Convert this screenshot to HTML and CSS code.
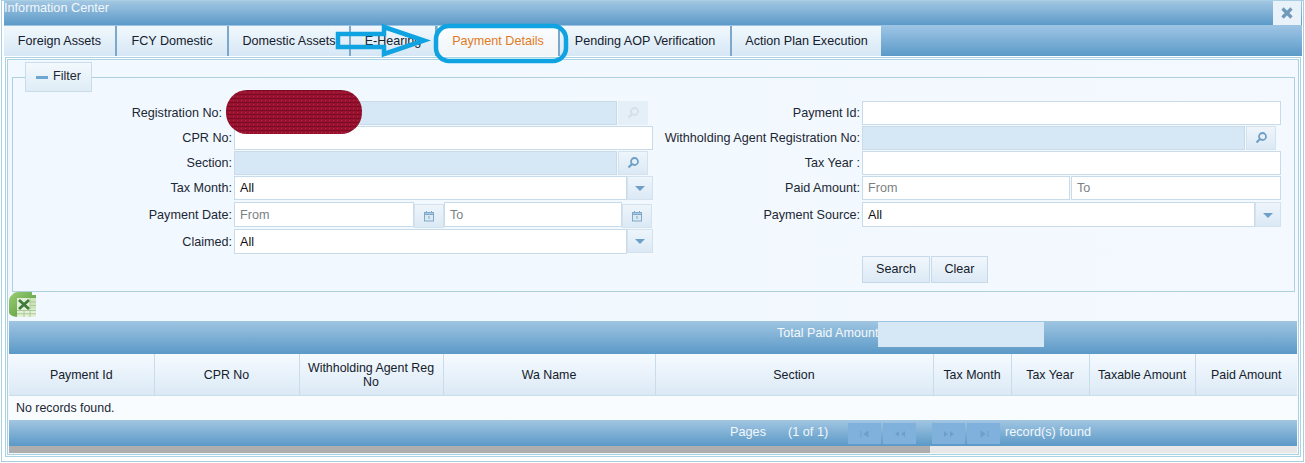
FILE: index.html
```html
<!DOCTYPE html>
<html lang="en">
<head>
<meta charset="utf-8">
<title>Information Center</title>
<link rel="stylesheet" href="styles.css">
</head>
<body>
<div class="dialog">
  <header class="titlebar">
    <span class="title-text">Information Center</span>
    <button class="close" aria-label="Close"><svg width="14" height="14" viewBox="0 0 14 14"><path d="M2.5 2.5L11.5 11.5M11.5 2.5L2.5 11.5" stroke="#6f98bb" stroke-width="3.2" fill="none"/></svg></button>
  </header>
  <nav class="tabbar">
    <a class="tab tab-1">Foreign Assets</a>
    <a class="tab tab-2">FCY Domestic</a>
    <a class="tab tab-3">Domestic Assets</a>
    <a class="tab tab-4">E-Hearing</a>
    <a class="tab tab-5 active">Payment Details</a>
    <a class="tab tab-6">Pending AOP Verification</a>
    <a class="tab tab-7">Action Plan Execution</a>
  </nav>
  <main class="panel">
    <div class="panel-in">
      <fieldset class="filter">
        <legend class="legend"><span class="minus"></span><span class="legend-text">Filter</span></legend>
        <div class="form">
          <label class="lbl lbl-reg">Registration No:</label>
          <div class="ctl">
            <div class="field disabled grow"></div>
            <button class="icon-btn faint" aria-label="Lookup"><svg width="14" height="14" viewBox="0 0 14 14"><circle cx="8.5" cy="5.5" r="3.5" fill="none" stroke="#d3e0ea" stroke-width="1.8"/><path d="M6 8L2.5 11.5" stroke="#d3e0ea" stroke-width="2.2"/></svg></button>
            <span class="spacer-5"></span>
          </div>
          <label class="lbl">Payment Id:</label>
          <div class="ctl"><div class="field grow"></div></div>

          <label class="lbl">CPR No:</label>
          <div class="ctl"><div class="field grow"></div></div>
          <label class="lbl">Withholding Agent Registration No:</label>
          <div class="ctl">
            <div class="field disabled grow"></div>
            <button class="icon-btn" aria-label="Lookup"><svg width="14" height="14" viewBox="0 0 14 14"><circle cx="8.5" cy="5.5" r="3.5" fill="none" stroke="#6f9fc6" stroke-width="1.8"/><path d="M6 8L2.5 11.5" stroke="#6f9fc6" stroke-width="2.2"/></svg></button>
            <span class="spacer-5"></span>
          </div>

          <label class="lbl">Section:</label>
          <div class="ctl">
            <div class="field disabled grow"></div>
            <button class="icon-btn" aria-label="Lookup"><svg width="14" height="14" viewBox="0 0 14 14"><circle cx="8.5" cy="5.5" r="3.5" fill="none" stroke="#6f9fc6" stroke-width="1.8"/><path d="M6 8L2.5 11.5" stroke="#6f9fc6" stroke-width="2.2"/></svg></button>
            <span class="spacer-5"></span>
          </div>
          <label class="lbl">Tax Year :</label>
          <div class="ctl"><div class="field grow"></div></div>

          <label class="lbl">Tax Month:</label>
          <div class="ctl">
            <div class="field value grow">All</div>
            <button class="drop" aria-label="Open"><span class="caret"></span></button>
          </div>
          <label class="lbl">Paid Amount:</label>
          <div class="ctl gap-1">
            <div class="field hint w-paid">From</div>
            <div class="field hint grow">To</div>
          </div>

          <label class="lbl low">Payment Date:</label>
          <div class="ctl">
            <div class="field hint w-from low">From</div>
            <button class="cal" aria-label="Calendar"><svg width="12" height="12" viewBox="0 0 12 12"><rect x="1.5" y="2.5" width="9" height="8.5" fill="#dbe9f4" stroke="#80a9c9"/><path d="M1.5 3h9v1.5h-9zM3.5 1v2M8.5 1v2M6 6v3" stroke="#80a9c9" fill="none"/></svg></button>
            <div class="field hint w-to low">To</div>
            <button class="cal" aria-label="Calendar"><svg width="12" height="12" viewBox="0 0 12 12"><rect x="1.5" y="2.5" width="9" height="8.5" fill="#dbe9f4" stroke="#80a9c9"/><path d="M1.5 3h9v1.5h-9zM3.5 1v2M8.5 1v2M6 6v3" stroke="#80a9c9" fill="none"/></svg></button>
          </div>
          <label class="lbl low">Payment Source:</label>
          <div class="ctl">
            <div class="field value grow low">All</div>
            <button class="drop tall" aria-label="Open"><span class="caret"></span></button>
          </div>

          <label class="lbl low">Claimed:</label>
          <div class="ctl">
            <div class="field value grow low">All</div>
            <button class="drop" aria-label="Open"><span class="caret"></span></button>
          </div>
          <span></span>
          <span></span>

          <span></span>
          <span></span>
          <span></span>
          <div class="actions">
            <button class="btn btn-search">Search</button>
            <button class="btn btn-clear">Clear</button>
          </div>
        </div>
      </fieldset>

      <div class="export">
        <svg width="28" height="27" viewBox="0 0 28 27" aria-label="Export to Excel">
          <defs><linearGradient id="xg" x1="0" y1="0" x2="1" y2="1"><stop offset="0" stop-color="#9ccd74"/><stop offset="1" stop-color="#4f9636"/></linearGradient></defs>
          <path d="M3 3Q5 0 9 0H23V3H27V25H10Q2 25 0 21V8Q0 5 3 3Z" fill="url(#xg)"/>
          <rect x="8" y="6" width="19" height="19" fill="#e3efd8"/>
          <rect x="21" y="6" width="6" height="11" fill="#cfe3bd"/>
          <path d="M8 18.500H27M8 21.800H27M15 18V25M21 6V25M21 10H27M21 13.500H27" stroke="#a9cb93" stroke-width="1"/>
          <path d="M10 8L20 17M20 8L10 17" stroke="#3f7a3b" stroke-width="2.800"/>
        </svg>
      </div>

      <section class="results">
        <div class="total-bar">
          <span class="total-label">Total Paid Amount</span>
          <div class="total-box"></div>
        </div>
        <table class="grid">
          <colgroup>
            <col class="c1"><col class="c2"><col class="c3"><col class="c4"><col class="c5"><col class="c6"><col class="c7"><col class="c8"><col class="c9">
          </colgroup>
          <thead>
            <tr>
              <th>Payment Id</th><th>CPR No</th><th>Withholding Agent Reg No</th><th>Wa Name</th><th>Section</th><th>Tax Month</th><th>Tax Year</th><th>Taxable Amount</th><th>Paid Amount</th>
            </tr>
          </thead>
          <tbody>
            <tr><td colspan="9">No records found.</td></tr>
          </tbody>
        </table>
        <div class="pager">
          <span class="pages">Pages</span>
          <span class="count">(1 of 1)</span>
          <button class="pg pg-first" aria-label="First"><svg width="12" height="8" viewBox="0 0 12 8"><path d="M2 1V7M9 1L5 4L9 7Z" fill="#6d9fca" stroke="#6d9fca"/></svg></button>
          <button class="pg pg-prev" aria-label="Previous"><svg width="12" height="8" viewBox="0 0 12 8"><path d="M5 1L1 4L5 7ZM11 1L7 4L11 7Z" fill="#6d9fca"/></svg></button>
          <button class="pg pg-next" aria-label="Next"><svg width="12" height="8" viewBox="0 0 12 8"><path d="M1 1L5 4L1 7ZM7 1L11 4L7 7Z" fill="#6d9fca"/></svg></button>
          <button class="pg pg-last" aria-label="Last"><svg width="12" height="8" viewBox="0 0 12 8"><path d="M10 1V7M3 1L7 4L3 7Z" fill="#6d9fca" stroke="#6d9fca"/></svg></button>
          <span class="found">record(s) found</span>
        </div>
        <div class="hscroll"><div class="thumb"></div></div>
      </section>
    </div>
  </main>
</div>

<svg class="markup" width="1305" height="463" viewBox="0 0 1305 463" aria-hidden="true">
  <defs>
    <pattern id="knit" width="4" height="4" patternUnits="userSpaceOnUse">
      <rect width="4" height="4" fill="#98122f"/>
      <rect y="2" width="4" height="1" fill="#7c0c25"/>
      <rect x="1" y="0" width="1" height="1" fill="#b02a47"/>
    </pattern>
  </defs>
  <rect x="226" y="90" width="136" height="44" rx="21" fill="url(#knit)"/>
  <path d="M338 34H384V27L424 40.500L384 54V47H338Z" fill="none" stroke="#0fa3e2" stroke-width="4.500"/>
  <rect x="436" y="26" width="130" height="35" rx="13" fill="none" stroke="#0fa3e2" stroke-width="4.500"/>
</svg>
</body>
</html>
```
FILE: styles.css
```css
* { box-sizing: border-box; }
html, body { margin: 0; padding: 0; background: #fff; }
body {
  width: 1305px;
  height: 463px;
  overflow: hidden;
  position: relative;
  font-family: "Liberation Sans", Arial, sans-serif;
  font-size: 12.600px;
  color: #1c2733;
}
button { font: inherit; color: inherit; padding: 0; margin: 0; }

.dialog {
  width: 1303px;
  height: 462px;
  margin-left: 1px;
  border: 1px solid #a9cfe2;
  padding: 0 1px 0 2px;
}

.titlebar {
  height: 24px;
  display: flex;
  justify-content: space-between;
  background: linear-gradient(#a2c6e2, #5c9ac8);
}
.title-text { color: #f1f7fb; line-height: 14px; font-size: 12.700px; }
.close {
  width: 28px;
  height: 24px;
  margin-right: 1px;
  border: 0;
  background: #e9f2f9;
  display: flex;
  align-items: center;
  justify-content: center;
}

.tabbar {
  height: 31px;
  display: flex;
  padding-top: 1px;
  background: linear-gradient(#9ec4e3 0, #8fbbdf 25%, #5b9ac8 100%);
}
.tab {
  height: 30px;
  line-height: 30px;
  text-align: center;
  color: #15202b;
  background: linear-gradient(#f1f8fd, #d6e7f5);
  box-shadow: 2px 0 0 #7ea8ca;
}
.tab-1 { width: 111px; margin-right: 2px; }
.tab-2 { width: 110px; margin-right: 2px; }
.tab-3 { width: 120px; margin-right: 2px; }
.tab-4 { width: 84px; margin-right: 3px; }
.tab-5 { width: 120px; margin-right: 2px; }
.tab-6 { width: 170px; margin-right: 2px; }
.tab-7 { width: 149px; box-shadow: none; }
.tab.active { color: #e17a1d; background: linear-gradient(#fbfdff, #f1f5f8); }

.panel {
  height: 400px;
  margin: 1px 1px 0 1px;
  border: 1px solid #a9d2e2;
  padding: 1px;
}
.panel-in {
  height: 396px;
  border: 1px solid #a9d2e2;
  background: linear-gradient(90deg, #f1f8ff, #f3f9fe);
  padding: 0 1px;
}

.filter {
  margin: 2px 2px 0 3px;
  padding: 0;
  min-width: 0;
  height: 230px;
  border: 1px solid #aecfdc;
  border-radius: 0;
}
.legend {
  width: 67px;
  height: 30px;
  margin-left: 12px;
  padding: 0 0 2px;
  display: flex;
  align-items: center;
  justify-content: center;
  gap: 5px;
  border: 1px solid #c9dce9;
  background: linear-gradient(#f3f9fd, #dfecf6);
  color: #1c2733;
}
.legend-text { line-height: 16px; }
.minus { width: 12px; height: 3px; margin-top: 2px; background: #6ea6d2; display: block; }

.form {
  display: grid;
  grid-template-columns: 219px 419px 205px 419px;
  column-gap: 2px;
  grid-template-rows: 25px 25px 25px 26px 27px 27px 27px;
  padding-top: 9px;
}
.lbl { text-align: right; line-height: 24px; color: #1c2733; white-space: nowrap; }
.lbl.low { line-height: 26px; }
.lbl-reg { padding-right: 10px; }

.ctl { display: flex; height: 24px; }
.gap-1 { gap: 1px; }
.grow { flex: 1 1 0; min-width: 0; }
.field {
  height: 24px;
  background: #fff;
  border: 1px solid #c9dbe8;
  padding-left: 5px;
  line-height: 22px;
}
.field.low { height: 25px; line-height: 24px; }
.disabled { background: #d6e8f6; }
.value { color: #111; }
.hint { color: #7a7f85; }
.w-from { width: 180px; }
.w-to { width: 178px; }
.w-paid { width: 208px; }
.spacer-5 { width: 5px; }

.icon-btn, .drop, .cal {
  height: 24px;
  display: flex;
  align-items: center;
  justify-content: center;
  border: 1px solid #d3e2ed;
  background: linear-gradient(#eef5fb, #dbe9f5);
}
.icon-btn { width: 30px; margin-left: 1px; }
.icon-btn.faint { background: #e4eff8; border-color: #e4eff8; }
.drop { width: 26px; }
.drop.tall { height: 25px; }
.cal { width: 30px; margin-top: 2px; }
.caret {
  width: 0; height: 0;
  margin-top: 1px;
  border-left: 5px solid transparent;
  border-right: 5px solid transparent;
  border-top: 5px solid #6d9fc8;
}

.actions { display: flex; gap: 1px; }
.btn {
  height: 27px;
  padding-bottom: 2px;
  border: 1px solid #c5d9e8;
  background: linear-gradient(#f1f7fc, #dce9f5);
  color: #14202b;
}
.btn-search { width: 68px; }
.btn-clear { width: 57px; }

.export { height: 29px; }
.export svg { display: block; }

.results { width: 1288px; }
.total-bar {
  height: 33px;
  display: flex;
  padding-left: 768px;
  background: linear-gradient(#a0c5e2, #5b99c7);
}
.total-label { color: #f4f8fb; line-height: 24px; font-size: 12.600px; width: 101px; white-space: nowrap; }
.total-box { width: 166px; height: 25px; margin-top: 1px; background: #d6e8f6; }

.grid { width: 1288px; table-layout: fixed; border-collapse: collapse; }
.c1 { width: 145px; } .c2 { width: 145px; } .c3 { width: 144px; }
.c4 { width: 212px; } .c5 { width: 278px; } .c6 { width: 78px; }
.c7 { width: 78px; } .c8 { width: 106px; } .c9 { width: 102px; }
.grid th {
  height: 41px;
  padding: 2px 4px 0;
  font-weight: 400;
  font-size: 12.400px;
  line-height: 14px;
  color: #14202b;
  background: linear-gradient(#f5faff, #dbe9f5);
  border-right: 1px solid #c9dce9;
  border-bottom: 1px solid #c9dce9;
}
.grid th:last-child { border-right: 0; }
.grid td {
  height: 25px;
  padding: 0 0 0 7px;
  background: #f8fcff;
  font-size: 12.400px;
  color: #1c2733;
}

.pager {
  height: 26px;
  display: flex;
  align-items: flex-start;
  padding-left: 721px;
  color: #f1f7fb;
  font-size: 12.700px;
  line-height: 25px;
  background: linear-gradient(#a2c6e2, #5b99c7);
}
.pages { width: 58px; }
.count { width: 60px; }
.pg {
  width: 33px;
  height: 21px;
  margin-top: 3px;
  border: 0;
  background: #7fb1dc;
  display: flex;
  align-items: center;
  justify-content: center;
}
.pg-first, .pg-next { margin-right: 2px; }
.pg-prev { margin-right: 16px; }
.pg-last { margin-right: 5px; }

.hscroll { height: 7px; background: #e8e8e8; }
.thumb { width: 921px; height: 7px; background: #aeaeae; }

.markup { position: absolute; left: 0; top: 0; pointer-events: none; }
```
